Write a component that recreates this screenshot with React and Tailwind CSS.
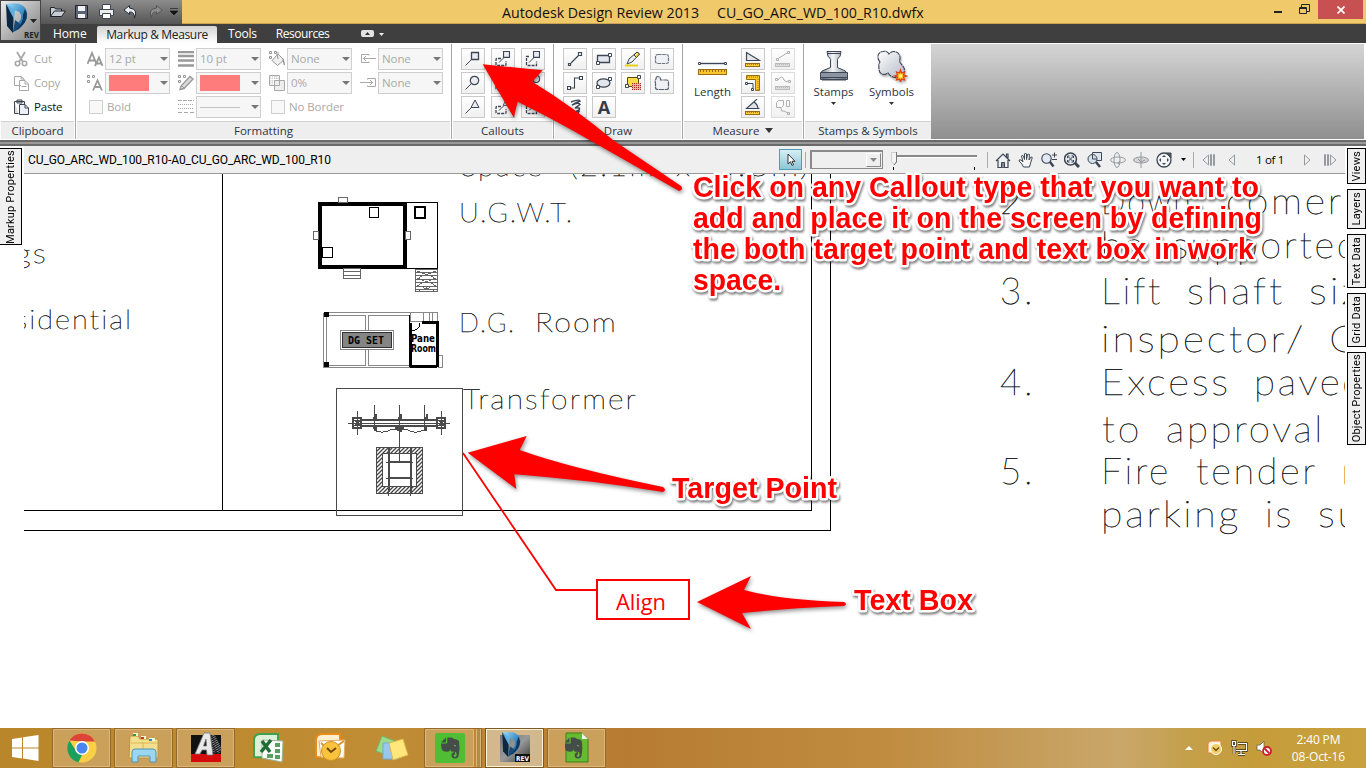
import React from "react";

const ui = "font-['Open_Sans','Noto_Sans',sans-serif]";

function Ico({ w = 16, h = 16, children, className = "" }) {
  return (
    <svg width={w} height={h} viewBox={`0 0 ${w} ${h}`} fill="none" stroke="#3d4654" className={`shrink-0 ${className}`}>
      {children}
    </svg>
  );
}

function Combo({ children }) {
  return (
    <div className="flex h-[22px] w-[65px] items-center justify-between border border-[#cfcfcf] bg-[#f6f6f6] pl-[3px] pr-px">
      <div className="flex items-center whitespace-nowrap">{children}</div>
      <svg width="8" height="4" className="shrink-0"><path d="M0 0h8L4 4z" fill="#777" /></svg>
    </div>
  );
}

function ToolButton({ children, dim }) {
  return (
    <div className={`flex h-[22px] w-[24px] items-center justify-center border bg-gradient-to-b from-white to-[#f0f0f0] ${dim ? "border-[#dcdcdc]" : "border-[#c9c9c9]"}`}>
      {children}
    </div>
  );
}

function Panel({ width, title, children, arrow }) {
  return (
    <div className={`flex shrink-0 flex-col ${width}`}>
      <div className="flex h-[77px] pt-1">{children}</div>
      <div className="flex h-[18px] items-center justify-center border-t border-[#d2d2d2] bg-[#eeeeee] text-[11.5px] text-[#2b3442]">
        {title}
        {arrow && <svg width="8" height="5" className="ml-1.5"><path d="M0 0h8L4 5z" fill="#333" /></svg>}
      </div>
    </div>
  );
}

const Sep = () => <div className="mx-px h-full w-px shrink-0 bg-[#a5a5a5]" />;
const gray = "#a8a8a8";

function Clipboard() {
  return (
    <Panel width="w-[73px]" title="Clipboard">
      <div className="flex flex-col gap-[2px] pl-3 text-[11.5px] tracking-[-0.2px]">
        <div className="flex h-[22px] items-center gap-[5px] text-[#a9a9a9]">
          <Ico><path d="M4 1l6 10M12 1L6 11" stroke={gray} strokeWidth="1.8" /><circle cx="4.500" cy="12.500" r="2.200" stroke={gray} strokeWidth="1.600" /><circle cx="11.500" cy="12.500" r="2.200" stroke={gray} strokeWidth="1.600" /></Ico>
          Cut
        </div>
        <div className="flex h-[22px] items-center gap-[5px] text-[#a9a9a9]">
          <Ico><path d="M8 10.500H1.500v-9H8L11 4v1M8 1.500V4h3" stroke={gray} /><path d="M6.500 5.500H12l3.500 3.500v6.500h-9zM12 5.500V9h3.500M8.500 11.500h5" stroke={gray} /></Ico>
          Copy
        </div>
        <div className="flex h-[22px] items-center gap-[5px] text-[#111]">
          <Ico><path d="M1.500 2.500h10V5M1.500 2.500v12h4M4 1h5v3H4z" fill="#ddd" /><path d="M6.500 5.500H12l3.500 3.500v6.500h-9zM12 5.500V9h3.500" fill="#eceff5" /></Ico>
          Paste
        </div>
      </div>
    </Panel>
  );
}

const Squares = ({ x = 0, y = 0 }) => (
  <path d={`M${x + 1.5} ${y + 1.5}h2v2h-2zM${x + 6.5} ${y + 1.5}h2v2h-2zM${x + 1.5} ${y + 6.5}h2v2h-2z`} stroke="#999" />
);

function Letters({ small }) {
  return (
    <Ico>
      {small ? <Squares x={-1} y={-1} /> : <path d="M.5 13L5 2l4.500 11M2.500 9.500h5" stroke="#999" strokeWidth="1.800" />}
      {small ? <path d="M6 15.500l4.500-10 4.500 10M7.500 12h6" stroke="#999" strokeWidth="1.800" /> : <path d="M8 15l4-8.500 3.500 8.500M9.500 12.500h5" stroke="#999" strokeWidth="1.800" />}
    </Ico>
  );
}

const Swatch = () => <div className="h-4 w-10 bg-[#ff7c7c]" />;

function Formatting() {
  const col = "flex flex-col gap-[2px]";
  const row = "flex h-[22px] items-center gap-[2px]";
  return (
    <Panel width="w-[373px]" title="Formatting">
      <div className="flex gap-[8px] pl-[10px] text-[11.5px] tracking-[-0.1px] text-[#a9a9a9]">
        <div className={col}>
          <div className={row}><Letters /><Combo>12 pt</Combo></div>
          <div className={row}><Letters small /><Combo><Swatch /></Combo></div>
          <div className={row}><div className="ml-[2px] mr-[2px] h-[14px] w-[14px] border border-[#cfcfcf] bg-[#f8f8f8]" />Bold</div>
        </div>
        <div className={col}>
          <div className={row}>
            <Ico><path d="M0 1h16M0 5h16M0 9.500h16M0 14.500h16" stroke="#999" strokeWidth="2.500" /></Ico>
            <Combo>10 pt</Combo>
          </div>
          <div className={row}>
            <Ico><Squares x={-1} y={-1} /><path d="M2 14.500l1-3.500L12 1.500l3 2.500L6 13.500z" fill="#ddd" stroke="#999" strokeWidth="1.400" /><path d="M3.500 10.500l3 3" stroke="#999" /></Ico>
            <Combo><Swatch /></Combo>
          </div>
          <div className={row}>
            <Ico><path d="M0 1.500h16" stroke={gray} strokeDasharray="4 1" /><path d="M0 5.500h16M0 9.500h16" stroke={gray} strokeDasharray="1 1" /><path d="M0 13.500h16" stroke={gray} strokeDasharray="4 2" /></Ico>
            <Combo><div className="h-px w-10 bg-[#c4c4c4]" /></Combo>
          </div>
        </div>
        <div className={col}>
          <div className={row}>
            <Ico><Squares x={-1} y={-1} /><path d="M3 9.500L9 3l6 6-6.500 5.500zM9 3V1M9 8l-1-5" fill="#eee" stroke="#999" /><path d="M14 8l1.500 6" stroke="#999" strokeWidth="1.500" /></Ico>
            <Combo>None</Combo>
          </div>
          <div className={row}>
            <Ico><path d="M.5.5h10v10H.5z" stroke={gray} /><path d="M1 3h9M1 6h5M1 8h4M3 1v9M6 1v4M8 1v4" stroke="#c4c4c4" strokeDasharray="1 1" /><path d="M5.500 5.500h10v10h-10z" fill="#eee" stroke={gray} /><path d="M5.500 5.500h5v5h-5z" stroke={gray} /></Ico>
            <Combo>0%</Combo>
          </div>
          <div className={row}><div className="ml-[2px] mr-[2px] h-[14px] w-[14px] shrink-0 border border-[#cfcfcf] bg-[#f8f8f8]" />No Border</div>
        </div>
        <div className={col}>
          <div className={row}>
            <Ico><path d="M9 4.500V3.500H1.500v8H9v-1M3 7.500h13M6 5L3.500 7.500 6 10" stroke={gray} /></Ico>
            <Combo>None</Combo>
          </div>
          <div className={row}>
            <Ico><path d="M7.500 4.500v-1h8v8h-8v-1M0 7.500h13M10 5l2.500 2.500L10 10" stroke={gray} /></Ico>
            <Combo>None</Combo>
          </div>
        </div>
      </div>
    </Panel>
  );
}

function CalloutIcon({ head, mode }) {
  const shape =
    head === "rect" ? <path d="M6.500 1.500h7v7h-7z" fill="#e9ebf0" strokeWidth="1.300" /> :
    head === "circle" ? <circle cx="9.500" cy="5.500" r="4.200" fill="#e9ebf0" strokeWidth="1.200" /> :
    <path d="M10 1l4 7.500H6z" fill="#e9ebf0" />;
  if (mode === 0) return <Ico>{shape}<path d="M6 9L.5 14.500" /></Ico>;
  return (
    <Ico>
      <path d={mode === 1 ? "M6 7.500H2q-1 0-1 1v5q0 1 1 1h8q1 0 1-1V10" : "M4 5.500H1.500v8q0 1 1 1h9v-4"} strokeDasharray="3 1" strokeWidth="1.300" />
      <g transform="translate(3 -.8) scale(.85)">{shape}</g>
      <path d="M8.500 7L4 11.500" />
    </Ico>
  );
}

function Callouts() {
  return (
    <Panel width="w-[99px]" title="Callouts">
      <div className="grid grid-cols-3 content-start gap-x-[6px] gap-y-[2px] pl-2">
        {["rect", "circle", "tri"].map((h) => [0, 1, 2].map((m) => (
          <ToolButton key={h + m}><CalloutIcon head={h} mode={m} /></ToolButton>
        )))}
      </div>
    </Panel>
  );
}

function Draw() {
  return (
    <Panel width="w-[126px]" title="Draw">
      <div className="grid grid-cols-4 content-start gap-x-[5px] gap-y-[2px] pl-2">
        <ToolButton><Ico><path d="M1.500 12.500h2v2h-2zM11.500 1.500h3v3h-3zM4 12l8-8" strokeWidth="1.200" /></Ico></ToolButton>
        <ToolButton><Ico><path d="M1.500 4.500h12v7h-12z" fill="#e4e6eb" strokeWidth="1.300" /><path d="M12.500 2.500h3v3h-3zM.5 10.500h3v3h-3z" fill="#fff" /></Ico></ToolButton>
        <ToolButton><Ico><path d="M2 13l2-5 8-7 2.500 2L7 11z" fill="#eee" /><path d="M9 4l3-3 2.500 2-3 3.500z" fill="#ffe23a" /><path d="M0 14.500h13" stroke="#e8d01a" strokeWidth="2" /></Ico></ToolButton>
        <ToolButton><Ico><path d="M4 3.500h8q2.500 0 2.500 2v5q0 2-2.500 2H4q-2.500 0-2.500-2v-5q0-2 2.500-2z" fill="#f0f1f4" stroke="#6d7684" strokeDasharray="3.500 .7" strokeWidth="1.200" /></Ico></ToolButton>
        <ToolButton><Ico><path d="M.5 11.500h3v3h-3zM12.500 1.500h3v3h-3zM4 13h3.500V3H12" strokeWidth="1.100" /></Ico></ToolButton>
        <ToolButton><Ico><ellipse cx="7.500" cy="8" rx="6.500" ry="4.200" fill="#e4e6eb" strokeWidth="1.200" /><path d="M12.500 2.500h3v3h-3zM.5 10.500h3v3h-3z" fill="#fff" /></Ico></ToolButton>
        <ToolButton><Ico w={18}><path d="M3.500 2.500h11v9h-11z" fill="#ffdb45" stroke="#5a4a00" /><path d="M8 8h9v7H8z" fill="#e9b29c" stroke="none" /><path d="M8 8.500h9M8 10.500h9M8 12.500h9M8 14.500h9" stroke="#a62c1b" strokeDasharray="1 1" /><path d="M13.500.5h3v3h-3zM1.500 9.500h3v3h-3z" fill="#fff" /></Ico></ToolButton>
        <ToolButton><Ico><path d="M2 4q0-2.500 2-2.500T6.500 4v1h6q2 0 2 2v5.500q0 2-2 2H4q-2.500 0-2.500-2V8q-1-2 .5-4z" fill="#eef0f3" stroke="#59626f" strokeWidth="1.200" strokeDasharray="5 .6" /></Ico></ToolButton>
        <ToolButton><Ico><path d="M4 3q8-3 9-1Q8 4 5 6q7-3 8-.5Q11 7 8 9q6-1 4 2-2 1-3 1.500h3l-2 3" strokeWidth="1.500" /></Ico></ToolButton>
        <ToolButton><span className="text-[18px] font-bold leading-none text-[#343d4b]">A</span></ToolButton>
      </div>
    </Panel>
  );
}

const Ruler = ({ x = 0, y = 11, w = 15, dim }) => (
  <g>
    <rect x={x + 0.5} y={y + 0.5} width={w - 1} height={3} fill={dim ? "#ddd" : "#ffcf3a"} stroke={dim ? "#bbb" : "#9a6b10"} />
    <path d={`M${x + 2} ${y + 1.500}h${w - 4}`} stroke={dim ? "#bbb" : "#b07c18"} strokeDasharray="1 1" />
  </g>
);

function BigButton({ icon, label, width, arrow }) {
  return (
    <div className={`flex flex-col items-center text-[11.5px] leading-4 text-[#2b3442] ${width}`}>
      <div className="flex h-[36px] items-center">{icon}</div>
      <span>{label}</span>
      {arrow && <svg width="5" height="3" className="mt-[2px]"><path d="M0 0h5L2.500 3z" fill="#333" /></svg>}
    </div>
  );
}

function Measure() {
  return (
    <Panel width="w-[118px]" title="Measure" arrow>
      <BigButton width="w-[57px]" label="Length" icon={
        <Ico w={30} h={16} className="mt-1">
          <path d="M3 3.500h24" strokeWidth="1.400" /><path d="M.5 2.500h2v2h-2zM26.500 2.500h2v2h-2z" fill="#fff" />
          <rect x=".5" y="9.500" width="28" height="5" fill="#f9c52e" stroke="#9a6b10" />
          <path d="M2 11h26" stroke="#9a6b10" strokeWidth="2" strokeDasharray="1 2" />
        </Ico>
      } />
      <div className="grid grid-cols-2 content-start gap-x-[6px] gap-y-[2px]">
        <ToolButton><Ico><path d="M1.500 1.500v8h13z" fill="#e4e6eb" strokeWidth="1.200" /><Ruler y={12} /></Ico></ToolButton>
        <ToolButton dim><Ico><path d="M1.500 7.500h2v2h-2zM12.500 .5h2v2h-2zM4 7l8-5" stroke="#b0b0b0" /><Ruler y={12} dim /></Ico></ToolButton>
        <ToolButton><Ico><path d="M1.500.5h13v15h-4v-11h-9z" fill="#ffc928" stroke="#9a6b10" /><path d="M2 2h11M13 4v11" stroke="#9a6b10" strokeDasharray="1 1" /><path d="M3 8.500h5V13" /><path d="M.5 7.500h2v2h-2zM6.500 13.500h2v2h-2z" fill="#fff" /></Ico></ToolButton>
        <ToolButton dim><Ico><path d="M.5 3.500h2v2h-2zM13.500 5.500h2v2h-2zM3 5q4-6 6 0 2 3 4 1" stroke="#b0b0b0" /><Ruler y={11} dim /></Ico></ToolButton>
        <ToolButton><Ico><path d="M9 2.500q4 3 4.500 7H3z" fill="#dfe2e8" stroke="none" /><path d="M12 0L1.500 9.500h13M9 3q4 3 4 6.500" strokeWidth="1.100" /><Ruler y={12} /></Ico></ToolButton>
        <ToolButton dim><Ico><path d="M1.500 3.500l2-2h5v5l-2 2h-5zM11.500 1.500h3v6h-3zM6 9l1 3.500M12.500 13.500h2v2h-2zM7 12h2l4 2" stroke="#b0b0b0" /></Ico></ToolButton>
      </div>
    </Panel>
  );
}

function Stamps() {
  return (
    <Panel width="w-[126px]" title="Stamps & Symbols">
      <BigButton width="w-[57px]" label="Stamps" arrow icon={
        <Ico w={30} h={32}>
          <defs><linearGradient id="st" x1="0" x2="1"><stop offset="0" stopColor="#777f8b" /><stop offset=".45" stopColor="#f4f5f7" /><stop offset="1" stopColor="#8a919c" /></linearGradient></defs>
          <path d="M8 1.500h14l-1 5q-2 1-2.500 3v8l8 3.500 2 4.500v4H1.500v-4L3 21l8.500-3.500v-8Q11 7.500 9 6.500z" fill="url(#st)" />
          <path d="M1.500 22.500h27v5h-27z" fill="#8d949f" /><path d="M3 29.500h24" strokeWidth="2" /><path d="M8 3.500h14" />
        </Ico>
      } />
      <BigButton width="w-[59px]" label="Symbols" arrow icon={
        <Ico w={32} h={32} className="drop-shadow-[1px_2px_1px_rgba(0,0,0,0.3)]">
          <defs><linearGradient id="sy" x1="0" y1="0" x2="1" y2="1"><stop offset="0" stopColor="#fff" /><stop offset="1" stopColor="#b3b9c6" /></linearGradient></defs>
          <path d="M4 12C0 7 2 2 7 1.500q4-1 6 2.500c4-5 12-2 11 5-1 3 0 4 2 6 5 5 2 11-3 12-5 2-9-1-11-4-4 3-9 1-9-4 0-3-1-4 1-7z" fill="url(#sy)" strokeWidth="1.100" strokeDasharray="5 .6" />
          <path d="M24.500 20l1 3 3-1-1 3 3 1-3 1 1 3-3-1-1 3-1-3-3 1 1-3-3-1 3-1-1-3 3 1z" fill="#ffc21f" stroke="#e33c13" strokeWidth="1.200" />
          <circle cx="24.500" cy="26" r="1.800" fill="#fff57a" stroke="none" />
        </Ico>
      } />
    </Panel>
  );
}

function DMark({ id }) {
  return (
    <g>
      <defs>
        <linearGradient id={id} x1="0" y1="0" x2="1" y2="1"><stop offset="0" stopColor="#a5dcf5" /><stop offset=".5" stopColor="#3f93cb" /><stop offset="1" stopColor="#0f4474" /></linearGradient>
      </defs>
      <path d="M5 3l8 2-1 27-6-7z" fill="#0b2742" />
      <path d="M5 3Q20 0 25 8q4 9-4 17-4 4-9 6l3-8q6-3 5-9-2-5-8-4z" fill={`url(#${id})`} />
      <path d="M5 3l9 6-1 9z" fill="#5fb0de" />
      <path d="M12 31l2-12 4 3q3 3 0 6z" fill="#174b78" />
      <path d="M24 8q5 9-4 18-3 2-5 3 8-8 7-15z" fill="#0e365e" />
    </g>
  );
}

function TitleArea() {
  return (
    <header className="flex h-[43px] bg-[#3f3f3f]">
      <div className="flex h-[41px] w-[41px] shrink-0 flex-col border border-[#444] bg-gradient-to-br from-[#ececec] to-[#7e7e7e]">
        <div className="relative h-full w-full">
          <svg width="39" height="39" viewBox="0 0 39 39"><DMark id="dm1" /></svg>
          <svg width="8" height="4" className="absolute left-[29px] top-[18px]"><path d="M0 0h7L3.500 4z" fill="#222" /></svg>
          <span className="absolute bottom-0 right-[1px] text-[8px] font-bold leading-[10px] text-[#222]">REV</span>
        </div>
      </div>
      <div className="flex flex-1 flex-col">
        <div className="flex h-6 border-b border-[#c9a54e] bg-[#f0c96b]">
          <div className="flex h-6 w-[141px] shrink-0 items-center bg-gradient-to-b from-[#8d8d8d] to-[#555] pl-2">
            <Ico w={18}><path d="M1.500 12.500v-9h4l1 1.500h6v2M1.500 12.500l4-5.500h11l-4 5.500z" fill="#c9ced6" stroke="#20252d" /></Ico>
            <Ico className="ml-[7px]"><path d="M1.500 1.500h12v13h-12z" fill="#5a6474" stroke="#20252d" /><path d="M4 2h7v5H4zM4 10h7v4H4z" fill="#f2f2f2" stroke="none" /></Ico>
            <Ico className="ml-[8px]" w={18}><path d="M4.500.5h8v5h-8z" fill="#fff" /><path d="M1.500 5.500h14v6h-14z" fill="#ececec" /><path d="M4.500 9.500h8v5h-8z" fill="#fff" /></Ico>
            <Ico className="ml-[7px]"><path d="M6.500 1.500L1 6l5.500 4.500V8q5-.5 5 6 4-9-5-10z" fill="#eceef2" stroke="#222a35" /></Ico>
            <Ico className="ml-[8px]"><path d="M9.500 1.500L15 6 9.500 10.500V8q-5-.5-5 6-4-9 5-10z" fill="#8e8e8e" stroke="#555" /></Ico>
            <svg width="8" height="8" className="ml-[7px]"><path d="M0 .5h8M0 3h8L4 7z" stroke="#111" fill="#111" strokeWidth=".6" /></svg>
          </div>
          <div className="flex-1 whitespace-pre pl-[320px] pt-px text-[14.2px] leading-6 text-[#111]">
            <span>Autodesk Design Review 2013</span><span className="ml-[18px]">CU_GO_ARC_WD_100_R10.dwfx</span>
          </div>
          <div className="flex items-start">
            <div className="mr-[17px] mt-[11px] h-[2px] w-2 bg-[#222]" />
            <svg width="11" height="11" className="mr-2 mt-1" fill="none" stroke="#222"><path d="M.5 3.500h7v6h-7zM.5 4.500h7M2.500 3V.5h8v7H8" /></svg>
            <div className="mr-[3px] flex h-[19px] w-[45px] items-center justify-center bg-[#c75050]">
              <svg width="8" height="8" stroke="#fff" strokeWidth="1.700"><path d="M.5.5l7 7M7.500.5l-7 7" /></svg>
            </div>
          </div>
        </div>
        <nav className="flex h-[19px] items-end text-[12px] leading-[18px] tracking-[-0.35px] text-white">
          <span className="w-14 pl-[12px] tracking-[-0.1px]">Home</span>
          <div className="flex h-[17px] w-[120px] items-center justify-center rounded-t-[2px] bg-gradient-to-b from-[#d2d2d2] to-white text-[#222]"><span>Markup &amp; Measure</span></div>
          <span className="ml-[11px] tracking-[-0.2px]">Tools</span>
          <span className="ml-[19px] tracking-[-0.45px]">Resources</span>
          <div className="mb-[6px] ml-[32px] flex h-[7px] w-[13px] items-center justify-center rounded-[2px] bg-[#e4e4e4]"><svg width="5" height="3"><path d="M0 3h5L2.500 0z" fill="#333" /></svg></div>
          <svg width="5" height="3" className="mb-[7px] ml-[5px]"><path d="M0 0h5L2.500 3z" fill="#eee" /></svg>
        </nav>
      </div>
    </header>
  );
}

function Ribbon() {
  return (
    <div className="flex h-[97px] border-y border-white bg-white pl-px pr-[2px]">
      <Clipboard /><Sep /><Formatting /><Sep /><Callouts /><Sep /><Draw /><Sep /><Measure /><Sep /><Stamps />
      <div className="flex-1 bg-gradient-to-b from-[#d5d5d5] to-[#8f8f8f]" />
    </div>
  );
}

function NavIcon({ children, dim, w = "w-[23px]" }) {
  return <div className={`flex ${w} shrink-0 justify-center`}><Ico className={dim ? "opacity-50" : ""}>{children}</Ico></div>;
}

function DocBar() {
  return (
    <div className="flex h-[28px] items-center border-b border-[#999] bg-[#efefef] pl-1">
      <span className="w-[751px] font-[Roboto,sans-serif] text-[12px] tracking-[-0.09px] text-black">CU_GO_ARC_WD_100_R10-A0_CU_GO_ARC_WD_100_R10</span>
      <div className="flex h-[21px] w-[23px] items-center justify-center border border-[#4f9cb5] bg-gradient-to-b from-[#d6eef5] to-[#8dc6d8]">
        <svg width="10" height="14"><path d="M2 1v10l2.500-2.300L6 12.500l1.600-.8L6 8.300h3z" fill="#fff" stroke="#222" strokeWidth=".9" /></svg>
      </div>
      <div className="ml-[3px] h-4 w-px bg-[#aaa]" />
      <div className="ml-1 flex h-[19px] w-[73px] justify-end border-2 border-b border-r border-[#8a8a8a] bg-[#efefef]">
        <div className="m-px flex w-[15px] items-center justify-center border border-white border-b-[#888] border-r-[#888]"><svg width="7" height="4"><path d="M0 0h7L3.500 4z" fill="#888" /></svg></div>
      </div>
      <svg width="88" height="22" className="ml-[7px]" fill="none">
        <path d="M3 6.500h84M3 7.500h84" stroke="#888" /><path d="M3 8.500h84" stroke="#fff" />
        <path d="M1.500 3.500h5v9l-2.500 3-2.500-3z" fill="#f4f4f4" stroke="#ccc" /><path d="M6.500 3v10L4 16" stroke="#777" /><path d="M3.500 18v3M84.500 18v3" stroke="#000" />
      </svg>
      <div className="ml-[9px] mr-[3px] h-4 w-px bg-[#aaa]" />
      <NavIcon><path d="M1 9l7-7 7 7M3 8v7.500h10V8M11.500 5V2h1.500v4.500" fill="#eef0f3" strokeWidth="1.200" /><path d="M6.500 15.500v-5h3v5" fill="#888" /></NavIcon>
      <NavIcon><path d="M5.500 15Q4.500 12 1 9q0-2 2-1l2 2-1.500-6Q4 2.500 5.500 4l1 3.500V2q1-2 2 0v5.500l1-5q2-1 2 0l-.5 5.500 2-3q2 0 1 1.500-1.500 4.500-2.500 8.500z" fill="#f6f6f6" /></NavIcon>
      <NavIcon><circle cx="5.500" cy="6.500" r="4.700" fill="#e1eaf2" strokeWidth="1.100" /><path d="M9 10l3.500 4.500" strokeWidth="2.500" /><path d="M11 3h5M13.500.5v5M11 7.500h5" /></NavIcon>
      <NavIcon><circle cx="6.500" cy="7" r="6" fill="#e4e7eb" strokeWidth="1.500" /><path d="M4 4.500l5 5M9 4.500l-5 5M3.500 6V4h2M7.500 4h2v2M3.500 8v2h2M7.500 10h2V8" /><path d="M11 11l4 4" strokeWidth="3" /></NavIcon>
      <NavIcon><path d="M5.500.5h9v8h-9z" fill="#dfe4ea" /><circle cx="5.500" cy="7" r="4.500" fill="#d6e1ec" /><path d="M5.500 3v4h4" /><path d="M9 10l4 5" strokeWidth="2.500" /></NavIcon>
      <NavIcon dim><ellipse cx="8" cy="8" rx="7.500" ry="3" /><ellipse cx="7" cy="8" rx="3" ry="7.500" /><path d="M10 9l-2 2 2 2" /></NavIcon>
      <NavIcon dim><ellipse cx="8" cy="8" rx="7.500" ry="3" fill="#bbb" /><path d="M8 0v16M5 7l3 3 4-2" /></NavIcon>
      <NavIcon><circle cx="8" cy="8" r="7" fill="#f4f5f7" strokeWidth="1.300" /><path d="M10 1h5v5z" fill="#555" /><path d="M8 3l2 2H6zM8 13l2-2H6zM3 8l2-2v4zM13 8l-2-2v4z" fill="#3d4654" stroke="none" /></NavIcon>
      <svg width="5" height="3" className="ml-[6px]"><path d="M0 0h5L2.500 3z" fill="#000" /></svg>
      <div className="ml-[7px] mr-[3px] h-4 w-px bg-[#aaa]" />
      <NavIcon dim><path d="M7.500 3v10L2 8zM9.500 2.500h1v11h-1zM12.500 2.500h1v11h-1z" /></NavIcon>
      <NavIcon dim><path d="M10.500 3v10L5 8z" /></NavIcon>
      <span className="ml-[13px] w-[39px] text-[11.5px] tracking-[-0.3px] text-black">1 of 1</span>
      <NavIcon dim><path d="M5.500 3v10L11 8z" /></NavIcon>
      <NavIcon dim><path d="M8.500 3v10L14 8zM2.500 2.500h1v11h-1zM5.500 2.500h1v11h-1z" /></NavIcon>
    </div>
  );
}

// Each entry: text, left edge, baseline, width, font size
const labels = [
  ["Space", 461, 175.5, 83, 27], ["(2.1m", 570, 175.5, 86, 27], ["x", 676, 175.5, 14, 27], ["3.6m)", 715, 175.5, 96, 27],
  ["U.G.W.T.", 459, 222, 115, 27], ["D.G.", 459, 332, 57, 27], ["Room", 535, 332, 83, 27], ["Transformer", 463, 409, 175, 28],
  ["gs", 15, 263, 33, 27], ["sidential", 15, 329, 118, 27],
  ["2.", 1000, 214, 35, 37], ["3.", 1000, 304, 35, 37], ["4.", 1000, 395, 35, 37], ["5.", 1000, 484, 35, 37],
  ["Down", 1101, 214, 92, 37], ["comer", 1226, 214, 118, 37],
  ["be", 1101, 258, 45, 37], ["supported", 1172, 258, 188, 37],
  ["Lift", 1101, 304, 62, 37], ["shaft", 1187, 304, 98, 37], ["siz", 1309, 304, 54, 37],
  ["inspector/", 1101, 352, 205, 37], ["C", 1329, 352, 30, 37],
  ["Excess", 1101, 395, 130, 37], ["paved", 1254, 395, 112, 37],
  ["to", 1102, 442, 40, 37], ["approval", 1166, 442, 159, 37],
  ["Fire", 1101, 484, 70, 37], ["tender", 1196, 484, 122, 37], ["r", 1341, 484, 15, 37],
  ["parking", 1101, 527, 140, 37], ["is", 1265, 527, 29, 37], ["su", 1318, 527, 44, 37],
];

function Drawing() {
  return (
    <svg width="1321" height="554" viewBox="24 174 1321 554" className="block bg-white" fill="none">
      <defs>
        <pattern id="hatch" width="4" height="4" patternUnits="userSpaceOnUse"><path d="M0 4L4 0M-1 1L1-1M3 5L5 3" stroke="#444" strokeWidth="1.300" /></pattern>
      </defs>
      <g stroke="#000" shapeRendering="crispEdges">
        <path d="M222.500 174V510M24 510.500H811.500V174M24 530.500H830.500V174" />
        <path d="M320 203.500H405V267H320z" strokeWidth="4" />
        <path d="M407 202.500h30.500v66H407" />
        <path d="M369.500 207.500h9v10h-9zM322.500 247.500h10v10h-10z" fill="#fff" />
        <path d="M415 207h10v11h-10z" strokeWidth="2" />
        <g stroke="#666" fill="#fff">
          <path d="M338.500 197.500h9v5h-9zM313.500 231.500h5v8h-5zM405.500 231.500h5v8h-5z" />
          <path d="M343.500 268h17v10h-17zM343.500 271.500h17M343.500 275.500h17" />
          <path d="M415.500 269.500h22v22h-22zM415 272.500h22M415 275.500h22M415 279.500h22M415 282.500h22M415 286.500h22M415 289.500h22" />
          <path d="M417 271l19 7-19 7 19 6M436 271l-19 7 19 7-19 6" strokeDasharray="3 2" fill="none" />
        </g>
        <g stroke="#888">
          <path d="M323.500 312.500H437.500V367M323.500 312.500V367.500H437M326.500 315.500H365.500V365.500H326.500zM368.500 315.500H409V365.500H368.500zM410.500 313v8h13v-8M429.500 313v8M432.500 313v8M437.500 355.500h5v12h-5" />
          <path d="M340.500 330.500h53v19h-53z" fill="#fff" />
          <path d="M342.500 332.500h49v15h-49z" fill="#858585" stroke="#333" />
        </g>
        <path d="M410.500 366.500V323M437 321V366.500M410 366.500h27M422 322h16" strokeWidth="3" />
        <path d="M409 324v-9M420 323q0 7-9 8" />
        <path d="M324 312h4v4h-4zM324 362h4v4h-4z" fill="#000" />
      </g>
      <g fontFamily="DejaVu Sans" fontWeight="700" fill="#000">
        <text x="348" y="344" fontSize="10" textLength="36" lengthAdjust="spacingAndGlyphs" fontFamily="DejaVu Sans Mono">DG SET</text>
        <text x="411" y="342" fontSize="10" textLength="24" lengthAdjust="spacingAndGlyphs">Pane</text>
        <text x="411" y="352" fontSize="10" textLength="25" lengthAdjust="spacingAndGlyphs">Room</text>
      </g>
      <g stroke="#4a4a4a" shapeRendering="crispEdges">
        <path d="M336.500 388.500h126v127h-126z" />
        <path d="M348 423.500h102M357.500 411v24M441.500 411v24M374.500 405v26M399.500 405v56M424.500 405v26" />
        <path d="M353 418h8v10h-8zM437 418h8v10h-8zM355 420l5 6M360 420l-5 6M439 420l5 6M444 420l-5 6" strokeWidth="2" />
        <path d="M362 420h75M362 426h75" strokeWidth="2" />
        <path d="M373 418h3v-4M398 418h3v-4M424 418h3v-4M373 428h3v3M395 428h9M397 430h4v2M424 428h2v3" strokeWidth="2" />
        <path d="M376 431q8 3 16-2h14q8 6 18 1" />
        <path fillRule="evenodd" d="M376.500 447.500h46v46h-46zM382.500 453.500v33h34v-33z" fill="url(#hatch)" />
        <path d="M388.500 448v44M410.500 448v44M388 462h22M388 478h22" strokeWidth="2" />
        <path d="M386 462.500h27M386 478.500h27M388.500 490v6M410.500 490v6" />
      </g>
      <g fontFamily="Lato" fontWeight="100" fill="#111" stroke="#111" strokeWidth=".4" className="[font-variant-ligatures:none] [text-rendering:geometricPrecision]">
        {labels.map(([t, x, y, w, s]) => (
          <text key={t + y} x={x} y={y} fontSize={s} letterSpacing={t.length === 1 ? 0 : s * 0.07} textLength={w} lengthAdjust="spacingAndGlyphs">{t}</text>
        ))}
      </g>
      <path d="M463 453L556 590H597" stroke="#f00" strokeWidth="1.800" />
      <rect x="597" y="580" width="92" height="39" stroke="#f00" strokeWidth="2" fill="#fff" />
      <text x="616" y="610" fontFamily="Open Sans" fontSize="21" fill="#f00" textLength="50" lengthAdjust="spacingAndGlyphs">Align</text>
    </svg>
  );
}

function SideTab({ label, height }) {
  return (
    <div className={`flex w-full items-center justify-center border border-black bg-[#f0f0f0] ${height}`}>
      <span className="rotate-180 whitespace-nowrap font-[Roboto,sans-serif] text-[11px] leading-4 tracking-[0.2px] text-black [writing-mode:vertical-rl]">{label}</span>
    </div>
  );
}

function TaskButton({ children, active, plain }) {
  return (
    <div className={`flex h-[38px] w-[57px] shrink-0 items-center justify-center ${plain ? "" : active ? "border border-[#fff3d8] bg-[#d2b88c] outline outline-1 outline-[#7d5a22]" : "border border-[#dcb77c] bg-[#caa05a] outline outline-1 outline-[#94692a]"}`}>
      {children}
    </div>
  );
}

const Elephant = () => (
  <g>
    <path d="M6 9.500l5-5v4.500q0 .5-.5.500z" fill="#444d48" />
    <path d="M6 10.500h5.500q.8 0 .8-.8V4.500h4q2 0 2.500 1.500 5 .5 5.200 2.500 1 6 0 12.500-.5 4.500-4 4.500-4 0-3.500-4 .5-2.500 3.500-2.500v2.500q-1.300 0-1.300 1.300t1.500 1.200 1.500-2.500q0-3-2.700-2.700-2.500.2-3.500-.8v-2.500q-.8 3.500-3.500 3.300-4-.3-5-1.800-1-3-1-6z" fill="#444d48" />
    <path d="M18.500 12.500q2-1 2.500 1z" fill="#b9e5a8" />
  </g>
);

function Taskbar() {
  return (
    <footer className="flex h-10 items-center bg-[linear-gradient(90deg,#b98629_0%,#c08d35_28%,#b77c32_46%,#c08c40_65%,#c9a76a_82%,#c4a04a_87%,#c59c39_92%,#c8a23e_100%)] text-white">
      <div className="flex w-[50px] justify-center">
        <svg width="28" height="26" viewBox="0 0 28 26"><path d="M1 4l10-1.500v10H1zM12 2.300L27.500 0v12.500H12zM1 13.500h10v10L1 22zM12 13.500h15.500V26L12 23.500z" fill="#fff" /></svg>
      </div>
      <div className="ml-[3px] flex gap-[5px]">
        <TaskButton>
          <svg width="30" height="30" viewBox="0 0 30 30"><circle cx="15" cy="15" r="14.500" fill="#f9cf45" /><path d="M2.500 7.500A14.500 14.500 0 0 1 28 8.500H15z" fill="#dc4437" /><path d="M2.500 7.500L9 18l6 4-3.500 7.300A14.500 14.500 0 0 1 2.500 7.500z" fill="#1d9f5b" /><circle cx="15" cy="15" r="7" fill="#fff" /><circle cx="15" cy="15" r="5.500" fill="#4a86ef" /></svg>
        </TaskButton>
        <TaskButton>
          <svg width="32" height="32" viewBox="0 0 32 32"><path d="M2 4h8l2 3h18v19H1z" fill="#f4df8e" stroke="#b99642" /><path d="M5 1h5v3H5zM13 4h5v3h-5zM21 6h6v3h-6z" fill="#eef5d0" /><path d="M5 2h3v2H5z" fill="#16a72d" /><path d="M13 5h3v2h-3z" fill="#cb382b" /><path d="M21 7h3v2h-3z" fill="#2789d7" /><path d="M15 10v12M3 11h27" stroke="#d8b85b" /><path d="M4 30V20q0-3 3-3h18q3 0 3 3v10h-6v-6H10v6z" fill="#9bd5ef" stroke="#5096b9" /></svg>
        </TaskButton>
        <TaskButton>
          <svg width="32" height="32" viewBox="0 0 32 32"><path d="M1 3h30v19H1z" fill="#111" /><path d="M19 3l10 18M23 3l8 15M16 5l9 16" stroke="#888" strokeDasharray="1 1" strokeWidth="3" /><path d="M1 22h30v8H1z" fill="#d60c0c" /><path d="M5 22L14 1h6l3 22h-6l-.5-5H12l-2 4zM13.500 14h3L16 7z" fillRule="evenodd" fill="#e8e8e8" stroke="#777" strokeWidth=".8" /></svg>
        </TaskButton>
        <TaskButton plain>
          <svg width="32" height="32" viewBox="0 0 32 32"><path d="M2 25V8q0-6 7-6h17v24z" fill="#dff0d8" stroke="#3fa14d" strokeWidth="2" /><path d="M10 8l21 1-1 21-20-4z" fill="#fff" stroke="#9ab79d" /><path d="M23 11h5v4h-5zM23 17h5v4h-5zM23 23h5v4h-5zM15 22h6v4h-6z" fill="#5b9e62" /><path d="M10 9l8 11M19 8L9 20" stroke="#206c35" strokeWidth="3.500" /></svg>
        </TaskButton>
        <TaskButton plain>
          <svg width="32" height="32" viewBox="0 0 32 32"><path d="M2 25V8q0-6 7-6h17v24z" fill="#fff0d0" stroke="#e98a1c" strokeWidth="2" /><path d="M5 9l26-1-1 18-23-1z" fill="#fff" stroke="#e3ab65" /><path d="M7 11l9 8 14-10" stroke="#d9922d" fill="none" strokeWidth="2" /><circle cx="17" cy="19" r="9.500" fill="#f9c33e" stroke="#d3901d" /><path d="M13 16l4 4 5-4" stroke="#75480d" fill="none" strokeWidth="2" /></svg>
        </TaskButton>
        <TaskButton plain>
          <svg width="34" height="30" viewBox="0 0 34 30"><path d="M7 3l13 5-6 15L1 18z" fill="#9ddb8a" stroke="#73b464" /><path d="M8 10h15v16H8z" fill="#98c8f2" stroke="#75a8d7" /><path d="M14 10l14-4 5 16-15 5z" fill="#ffe77c" stroke="#d8b94e" /></svg>
        </TaskButton>
        <div className="flex w-[56px] gap-px outline outline-1 outline-[#94692a]">
          <div className="flex h-[38px] w-[49px] shrink-0 items-center justify-center border border-[#dcb77c] bg-[#caa05a]">
            <svg width="30" height="30" viewBox="0 0 30 30"><rect width="30" height="30" rx="2" fill="#50bd35" /><Elephant /></svg>
          </div>
          <div className="h-[38px] w-[2px] border-r border-[#dcb77c] bg-[#b88a45]" />
          <div className="h-[38px] w-[3px] border-r border-[#dcb77c] bg-[#b88a45]" />
        </div>
        <TaskButton active>
          <svg width="32" height="32" viewBox="0 0 32 32"><defs><linearGradient id="bg1" x1="0" y1="0" x2="1" y2="1"><stop offset="0" stopColor="#777" /><stop offset=".5" stopColor="#999" /><stop offset="1" stopColor="#333" /></linearGradient></defs><path d="M1 3h30v27H1z" fill="url(#bg1)" /><g transform="translate(-1 -2) scale(.85)"><DMark id="dm2" /></g><path d="M16 22h15v8H16z" fill="#111" /><text x="17" y="29" fontFamily="DejaVu Sans" fontWeight="700" fontSize="6.500" fill="#fff" textLength="13" lengthAdjust="spacingAndGlyphs">REV</text></svg>
        </TaskButton>
        <TaskButton>
          <svg width="24" height="32" viewBox="0 0 24 32"><path d="M1 1h16l6 6v23H1z" fill="#66bb31" stroke="#39811e" /><g transform="translate(-6 1) scale(.95 1)"><Elephant /></g><path d="M17 1v6h6z" fill="#eef8e8" /></svg>
        </TaskButton>
      </div>
      <div className="ml-auto flex items-center">
        <svg width="8" height="4" className="mr-[14px]"><path d="M0 4h8L4 0z" fill="#fff" /></svg>
        <svg width="16" height="16" className="mr-2"><path d="M1 13V4q0-3 4-3h9v12z" fill="#fff0d6" stroke="#e6823a" /><circle cx="9" cy="9" r="5.500" fill="#f3ce63" stroke="#fff" /><path d="M6 7.500l3 3 3-3" fill="none" stroke="#704c13" strokeWidth="1.500" /></svg>
        <svg width="17" height="16" className="mr-2" fill="none" stroke="#3e300e" strokeWidth="2.500"><path d="M7 3.500h8.500v7H5M10 11v3.500M7 14.500h7M1.500 1.500h3v4h-3zM3 6v8" /><path d="M7 3.500h8.500v7H5M10 11v3.500M7 14.500h7M1.500 1.500h3v4h-3zM3 6v8" stroke="#fff" strokeWidth="1.200" /></svg>
        <svg width="16" height="16" className="mr-[20px]"><path d="M1 5h3l4-4v13l-4-4H1z" fill="#fff" stroke="#555" strokeWidth=".7" /><circle cx="11" cy="11" r="4" fill="#fff" stroke="#d31e2b" strokeWidth="1.800" /><path d="M8.500 8.500l5 5" stroke="#d31e2b" strokeWidth="1.800" /></svg>
        <div className="mr-[21px] flex flex-col items-center text-[12px] leading-[17px] tracking-[-0.15px]"><span>2:40 PM</span><span>08-Oct-16</span></div>
      </div>
    </footer>
  );
}

const notes = [
  ["Click on any Callout type that you want to", 693, 197, 566], ["add and place it on the screen by defining", 693, 228, 569],
  ["the both target point and text box in work", 693, 259, 561], ["space.", 693, 290, 88],
  ["Target Point", 672, 498, 165], ["Text Box", 854, 610, 119],
];

function Annotations() {
  return (
    <svg width="1366" height="768" className="pointer-events-none absolute left-0 top-0">
      <g fill="#f00" className="drop-shadow-[1px_2px_2px_rgba(0,0,0,0.45)]">
        <path d="M482.700 64.300L542.700 70.300 532.300 81.700Q575 108 613 140L681 186q3 4-2 5L593 142Q555 120 517.700 101.700L513.700 117.500z" />
        <path d="M467.700 452.700L526.700 436 519.700 450Q570 468 663 487q4 3 0 5Q590 480 514.300 474.300L516.300 489z" />
        <path d="M697 602L751 576 744 590Q780 600 844 602q4 2 0 4Q790 608 742 613L751 629z" />
      </g>
      <g fontFamily="Liberation Sans" fontWeight="700" fontSize="29" fill="#f00" stroke="#fff" strokeWidth="5" strokeLinejoin="round" className="[paint-order:stroke] drop-shadow-[1px_2px_1px_rgba(0,0,0,0.5)]">
        {notes.map(([t, x, y, w]) => <text key={t} x={x} y={y} textLength={w} lengthAdjust="spacingAndGlyphs">{t}</text>)}
      </g>
    </svg>
  );
}

export default function App() {
  return (
    <div className={`relative flex h-[768px] w-[1366px] flex-col overflow-hidden bg-white ${ui}`}>
      <TitleArea />
      <Ribbon />
      <div className="h-[6px] border-y-2 border-[#6a6a6a] bg-[#9a9a9a]" />
      <div className="flex h-[582px]">
        <aside className="w-6 shrink-0 pr-[2px] pt-[2px]">
          <div className="-ml-px"><SideTab label="Markup Properties" height="h-[97px]" /></div>
        </aside>
        <main className="w-[1321px] shrink-0"><DocBar /><Drawing /></main>
        <aside className="flex flex-1 flex-col gap-[5px] pl-[2px] pt-[2px]">
          <SideTab label="Views" height="h-[36px]" />
          <SideTab label="Layers" height="h-[40px]" />
          <SideTab label="Text Data" height="h-[54px]" />
          <SideTab label="Grid Data" height="h-[54px]" />
          <SideTab label="Object Properties" height="h-[93px]" />
        </aside>
      </div>
      <Taskbar />
      <Annotations />
    </div>
  );
}
